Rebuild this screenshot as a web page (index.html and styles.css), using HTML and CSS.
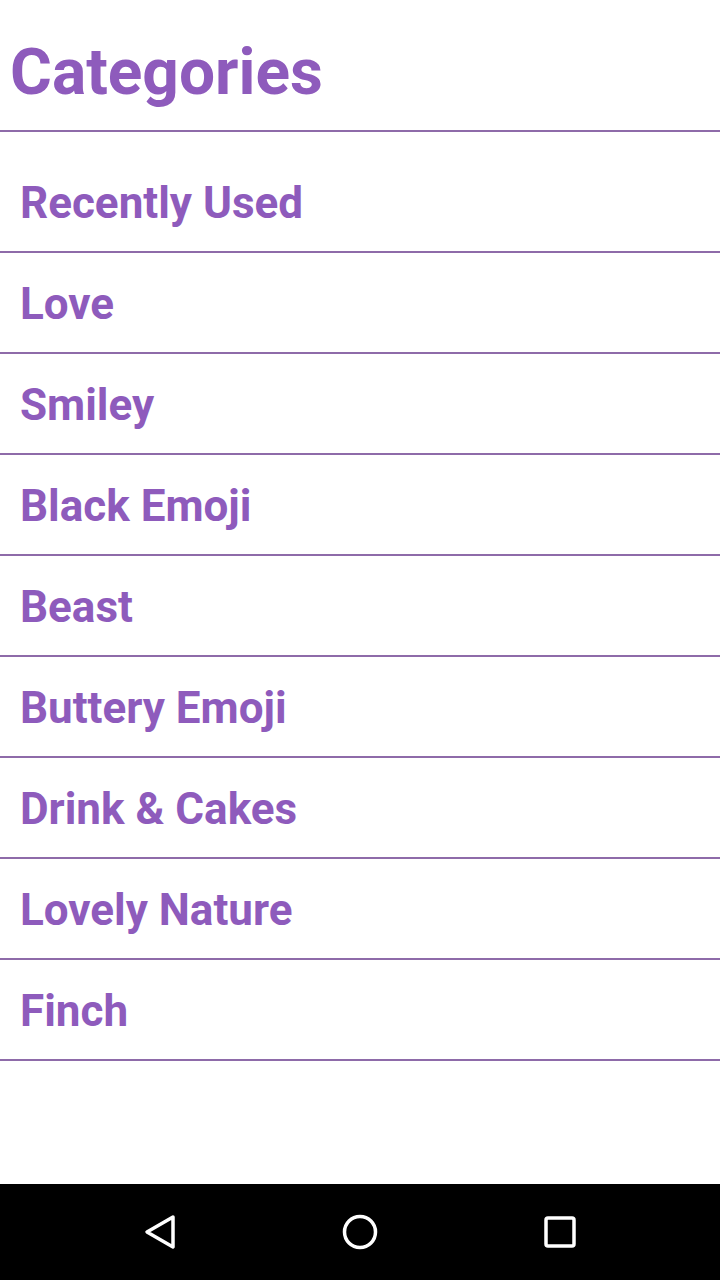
FILE: index.html
```html
<!DOCTYPE html>
<html lang="en">
<head>
    <meta charset="UTF-8">
    <meta name="viewport" content="width=device-width, initial-scale=1.0">
    <title>Categories</title>
    <link rel="stylesheet" href="styles.css">
</head>
<body>

<div class="screen">
    <header class="title-bar">
        <h1>Categories</h1>
    </header>

    <ul class="category-list">
        <li>Recently Used</li>
        <li>Love</li>
        <li>Smiley</li>
        <li>Black Emoji</li>
        <li>Beast</li>
        <li>Buttery Emoji</li>
        <li>Drink &amp; Cakes</li>
        <li>Lovely Nature</li>
        <li>Finch</li>
    </ul>
</div>

<nav class="nav-bar">
    <svg width="40" height="40" viewBox="0 0 40 40">
        <path d="M33 5 L7 20 L33 35 Z" fill="none" stroke="#fff" stroke-width="3.5" stroke-linejoin="round"/>
    </svg>
    <svg width="40" height="40" viewBox="0 0 40 40">
        <circle cx="20" cy="20" r="15.5" fill="none" stroke="#fff" stroke-width="3.5"/>
    </svg>
    <svg width="40" height="40" viewBox="0 0 40 40">
        <rect x="6" y="6" width="28" height="28" rx="2" fill="none" stroke="#fff" stroke-width="3.5"/>
    </svg>
</nav>

</body>
</html>
```

FILE: styles.css
```css
body {
    margin: 0;
    padding: 0;
    font-family: Roboto, "Liberation Sans", sans-serif;
    background-color: #fff;
    width: 720px;
    height: 1280px;
    display: flex;
    flex-direction: column;
}
.screen {
    flex: 1;
}
.title-bar {
    height: 116px;
    padding-top: 14px;
    border-bottom: 2px solid #8e6ba9;
    display: flex;
    align-items: center;
}
.title-bar h1 {
    margin: 0 0 0 10px;
    font-size: 64px;
    font-weight: bold;
    color: #8e5bbc;
}
.category-list {
    list-style: none;
    margin: 20px 0 0 0;
    padding: 0;
}
.category-list li {
    height: 96px;
    padding-top: 3px;
    border-bottom: 2px solid #8e6ba9;
    display: flex;
    align-items: center;
    padding-left: 20px;
    font-size: 44px;
    font-weight: bold;
    color: #8e5bbc;
}
.nav-bar {
    height: 96px;
    background-color: #000;
    display: flex;
    justify-content: space-between;
    align-items: center;
    padding: 0 140px;
}
```
